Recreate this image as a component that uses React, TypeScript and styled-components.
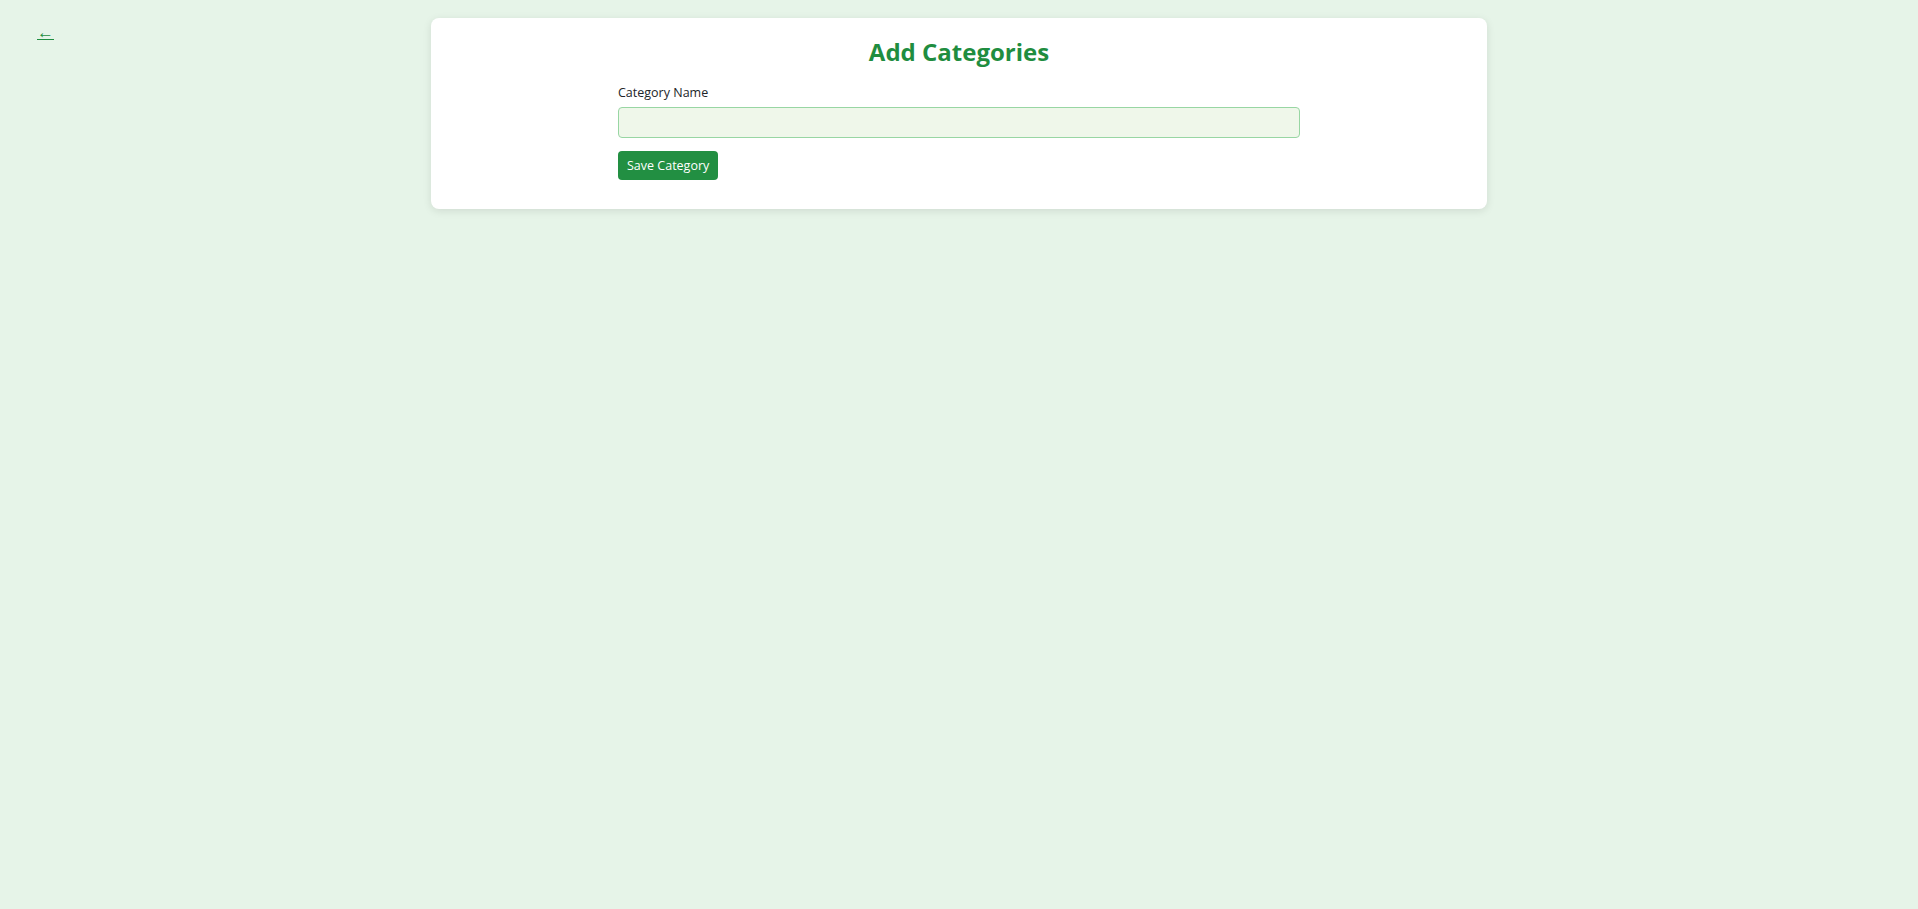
import React, { useState } from 'react';
import styled, { createGlobalStyle } from 'styled-components';

const GlobalStyle = createGlobalStyle`
    html, body {
        margin: 0;
        padding: 0;
        background: #e6f4e8;
        font-family: 'Segoe UI', 'Open Sans', 'Noto Sans', sans-serif;
        color: #212529;
    }
    * {
        box-sizing: border-box;
    }
`;

const Page = styled.div`
    min-height: 909px;
    display: grid;
    grid-template-columns: 1fr 1056px 1fr;
    align-items: start;
    padding-top: 18px;
`;

const BackLink = styled.a`
    justify-self: start;
    margin: 4px 0 0 37px;
    color: #1f8d40;
    font-size: 17px;
    line-height: 20px;
    text-decoration: underline;
    cursor: pointer;
`;

const Card = styled.div`
    background: #ffffff;
    border-radius: 8px;
    box-shadow: 0 2px 8px rgba(0, 0, 0, 0.1);
    padding: 19px 20px 29px;
`;

const Title = styled.h2`
    margin: 0 0 16px;
    text-align: center;
    color: #1f8d40;
    font-size: 24px;
    font-weight: 700;
    line-height: 30px;
`;

const Form = styled.form`
    width: 682px;
    margin: 0 auto;
    display: flex;
    flex-direction: column;
    align-items: flex-start;
`;

const Label = styled.label`
    font-size: 12.5px;
    line-height: 19px;
    color: #212529;
    margin-bottom: 5px;
`;

const Input = styled.input`
    width: 100%;
    height: 31px;
    border: 1px solid #98d6a3;
    border-radius: 4px;
    background: #eff7ea;
    padding: 4px 10px;
    font-size: 13px;
    font-family: inherit;
    margin-bottom: 13px;

    &:focus {
        outline: none;
        border-color: #1f8d40;
    }
`;

const SaveButton = styled.button`
    height: 29px;
    padding: 0 9px;
    border: none;
    border-radius: 4px;
    background: #228f42;
    color: #ffffff;
    font-family: inherit;
    font-size: 12.5px;
    cursor: pointer;
`;

const App = () => {
    const [name, setName] = useState('');

    return (
        <>
            <GlobalStyle />
            <Page>
                <BackLink href="#">&larr;</BackLink>
                <Card>
                    <Title>Add Categories</Title>
                    <Form onSubmit={(e) => e.preventDefault()}>
                        <Label htmlFor="categoryName">Category Name</Label>
                        <Input id="categoryName" value={name} onChange={(e) => setName(e.target.value)} />
                        <SaveButton type="submit">Save Category</SaveButton>
                    </Form>
                </Card>
                <div />
            </Page>
        </>
    );
};

export default App;
